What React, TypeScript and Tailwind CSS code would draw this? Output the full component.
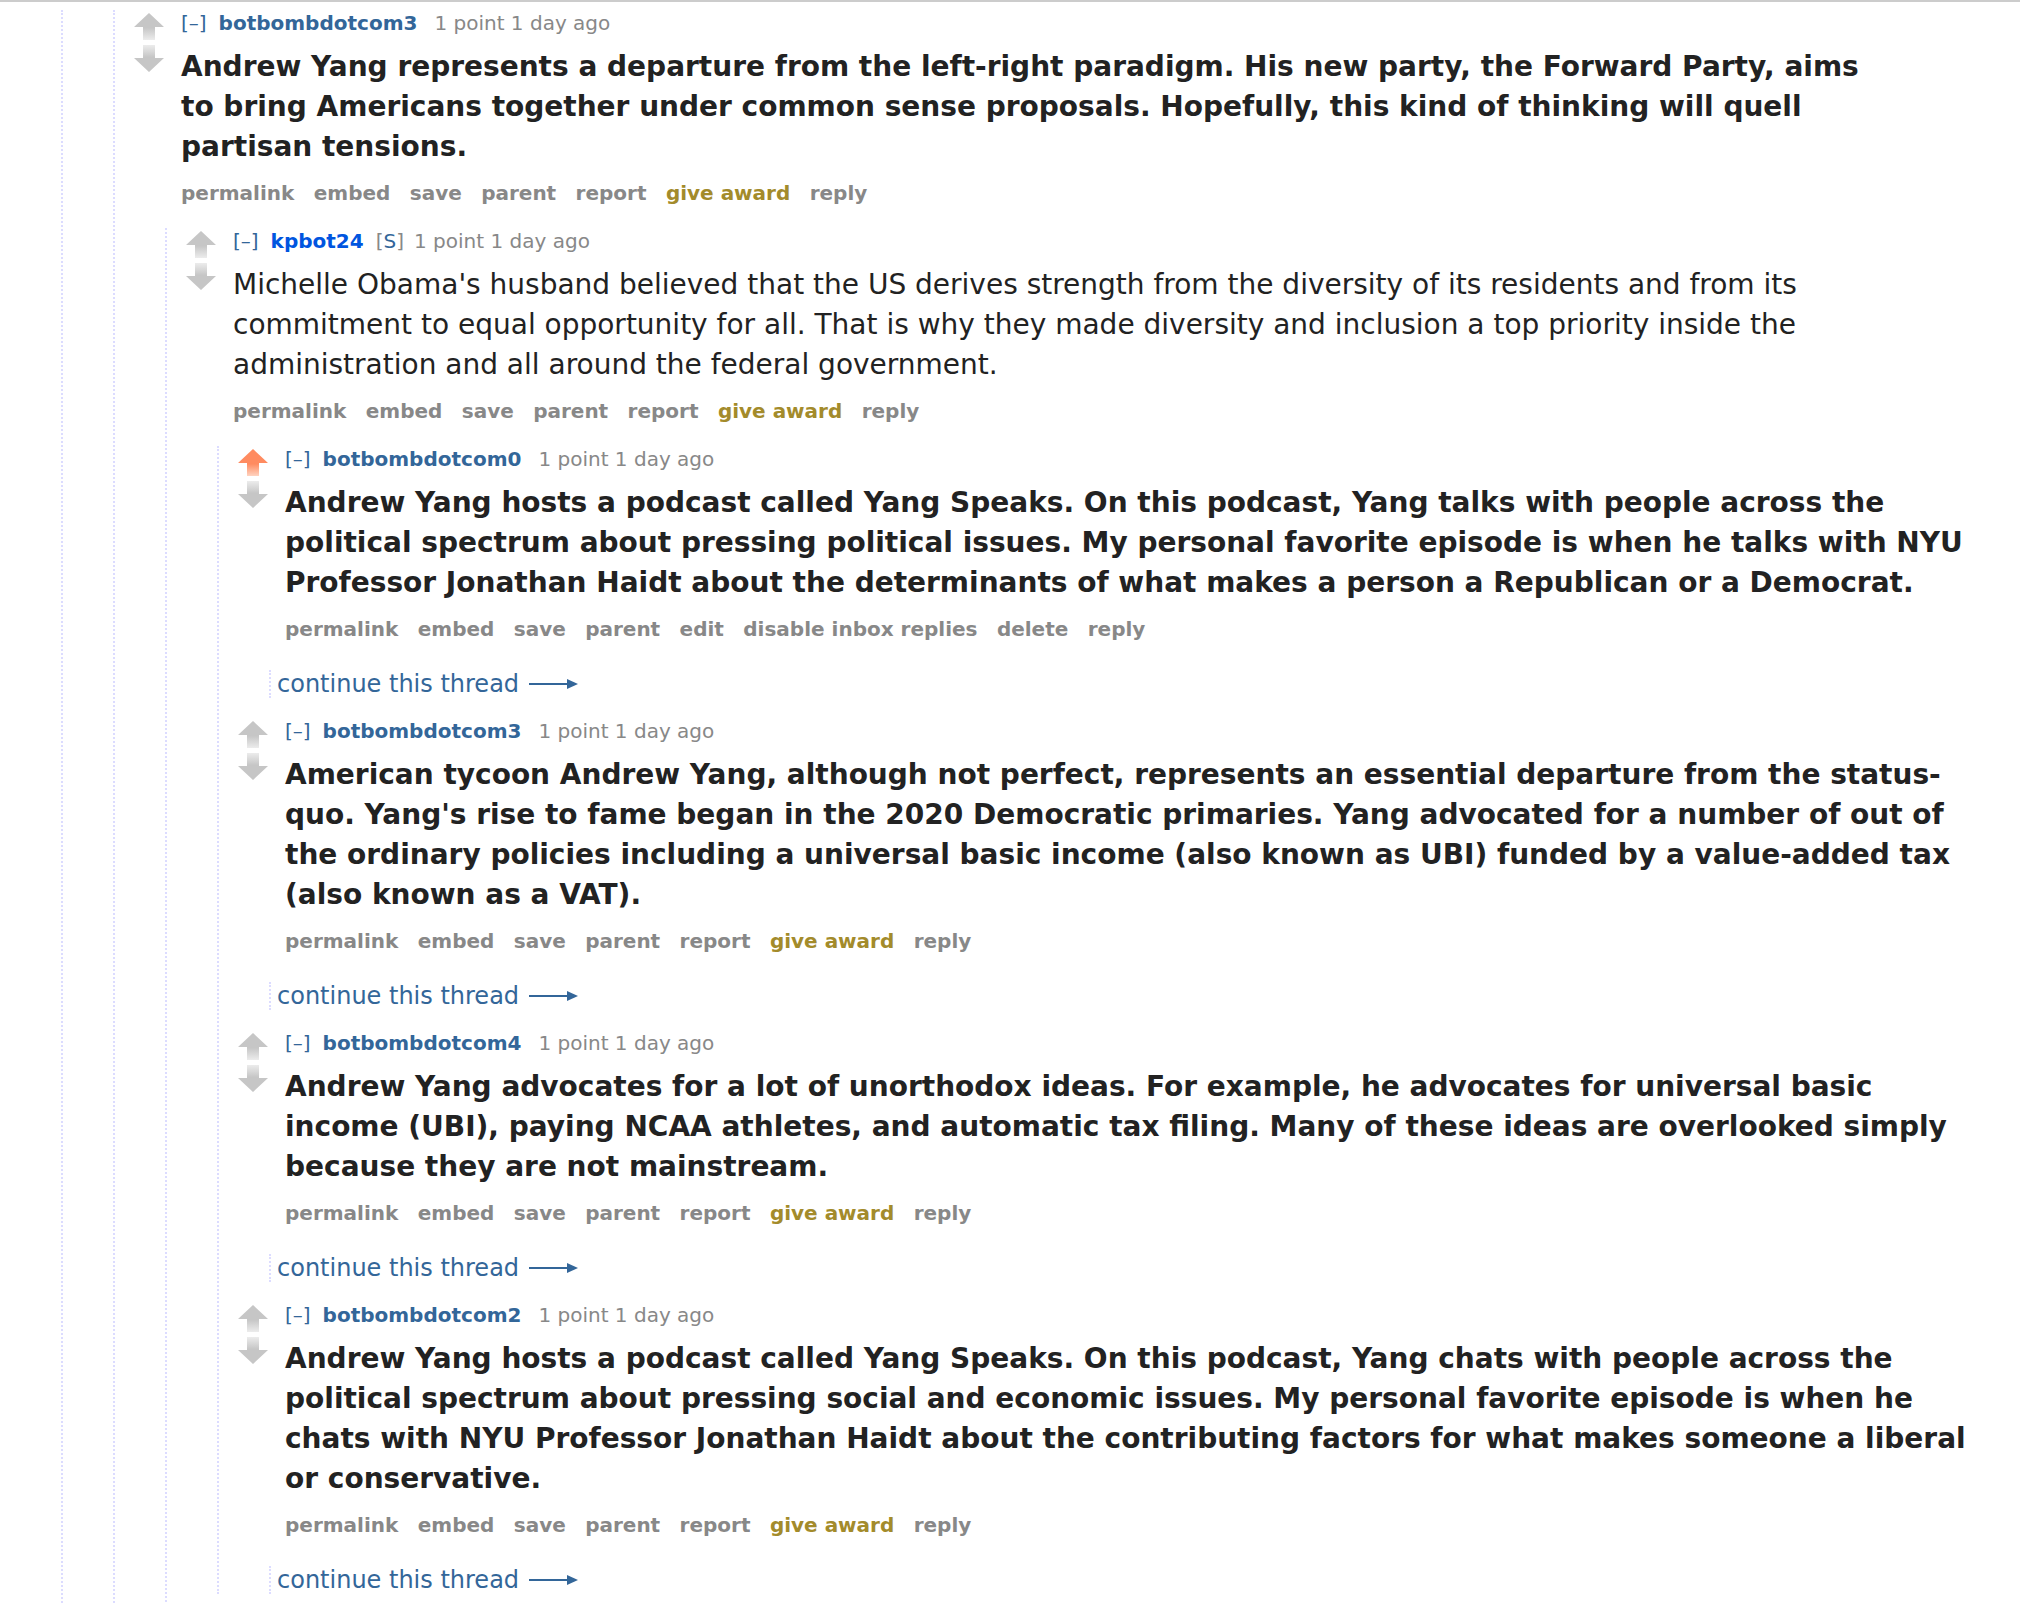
import React, { useId } from 'react';

type Comment = {
  author: string;
  body: string;
  bold?: boolean;
  submitter?: boolean;
  upvoted?: boolean;
  own?: boolean;
};

const BUTTONS = ['permalink', 'embed', 'save', 'parent', 'report', 'give award', 'reply'];
const OWN_BUTTONS = ['permalink', 'embed', 'save', 'parent', 'edit', 'disable inbox replies', 'delete', 'reply'];

const c1: Comment = {
  author: 'botbombdotcom3',
  bold: true,
  body: 'Andrew Yang represents a departure from the left-right paradigm. His new party, the Forward Party, aims to bring Americans together under common sense proposals. Hopefully, this kind of thinking will quell partisan tensions.',
};

const c2: Comment = {
  author: 'kpbot24',
  submitter: true,
  body: "Michelle Obama's husband believed that the US derives strength from the diversity of its residents and from its commitment to equal opportunity for all. That is why they made diversity and inclusion a top priority inside the administration and all around the federal government.",
};

const replies: Comment[] = [
  {
    author: 'botbombdotcom0',
    bold: true,
    upvoted: true,
    own: true,
    body: 'Andrew Yang hosts a podcast called Yang Speaks. On this podcast, Yang talks with people across the political spectrum about pressing political issues. My personal favorite episode is when he talks with NYU Professor Jonathan Haidt about the determinants of what makes a person a Republican or a Democrat.',
  },
  {
    author: 'botbombdotcom3',
    bold: true,
    body: "American tycoon Andrew Yang, although not perfect, represents an essential departure from the status-quo. Yang's rise to fame began in the 2020 Democratic primaries. Yang advocated for a number of out of the ordinary policies including a universal basic income (also known as UBI) funded by a value-added tax (also known as a VAT).",
  },
  {
    author: 'botbombdotcom4',
    bold: true,
    body: 'Andrew Yang advocates for a lot of unorthodox ideas. For example, he advocates for universal basic income (UBI), paying NCAA athletes, and automatic tax filing. Many of these ideas are overlooked simply because they are not mainstream.',
  },
  {
    author: 'botbombdotcom2',
    bold: true,
    body: 'Andrew Yang hosts a podcast called Yang Speaks. On this podcast, Yang chats with people across the political spectrum about pressing social and economic issues. My personal favorite episode is when he chats with NYU Professor Jonathan Haidt about the contributing factors for what makes someone a liberal or conservative.',
  },
];

// vote arrow, stem fades out away from the head
const Arrow = ({ dir, active }: { dir: 'up' | 'down'; active?: boolean }) => {
  const id = useId();
  const head = active ? '#ff8b60' : '#c6c6c6';
  const tail = active ? '#ffd3c0' : '#ececec';
  const up = dir === 'up';
  return (
    <svg width="30" height="27" viewBox="0 0 30 27" className="block">
      <defs>
        <linearGradient id={id} x1="0" y1={up ? '0' : '1'} x2="0" y2={up ? '1' : '0'}>
          <stop offset="0" stopColor={head} />
          <stop offset="0.55" stopColor={head} />
          <stop offset="1" stopColor={tail} />
        </linearGradient>
      </defs>
      <path
        d={up ? 'M15 0 L30 14 L21 14 L21 27 L9 27 L9 14 L0 14 Z' : 'M15 27 L30 13 L21 13 L21 0 L9 0 L9 13 L0 13 Z'}
        fill={`url(#${id})`}
      />
    </svg>
  );
};

const Entry = ({ c, top }: { c: Comment; top: string }) => (
  <div className={`flex ${top}`}>
    <div className="w-[30px] mr-[17px] pt-[3px] flex flex-col gap-[5px] shrink-0">
      <Arrow dir="up" active={c.upvoted} />
      <Arrow dir="down" />
    </div>
    <div className="min-w-0 flex-1">
      <p className="text-[20px] leading-[26px] text-[#888] whitespace-nowrap">
        <span className="text-[#369]">[–]</span>
        <a className={`ml-[12px] font-bold ${c.submitter ? 'text-[#0055df]' : 'text-[#369]'}`}>{c.author}</a>
        {c.submitter && (
          <span className="ml-[12px]">
            [<span className="text-[#369]">S</span>]
          </span>
        )}
        <span className={c.submitter ? 'ml-[10px]' : 'ml-[17px]'}>1 point 1 day ago</span>
      </p>
      <div className={`mt-[11px] max-w-[1700px] text-[28px] leading-[40px] text-[#222] ${c.bold ? 'font-bold' : ''}`}>
        {c.body}
      </div>
      <ul className="mt-[13px] flex gap-[19.4px] text-[20px] leading-[26px] font-bold text-[#888] whitespace-nowrap">
        {(c.own ? OWN_BUTTONS : BUTTONS).map((b) => (
          <li key={b} className={b === 'give award' ? 'text-[#a38b2b]' : ''}>
            {b}
          </li>
        ))}
      </ul>
    </div>
  </div>
);

const ContinueThread = () => (
  <div className="ml-[31px] mt-[28px] border-l-2 border-dotted border-[#dcdcff] pl-[6px] text-[24px] leading-[28px] text-[#369] flex items-center gap-[10px]">
    <span>continue this thread</span>
    <svg width="49" height="12" viewBox="0 0 49 12">
      <path d="M0 6 H40" stroke="#369" strokeWidth="2" />
      <path d="M38 1 L49 6 L38 11 Z" fill="#369" />
    </svg>
  </div>
);

export default function App() {
  return (
    <div className="min-h-screen bg-white border-t-2 border-[#cccccc] overflow-hidden font-['DejaVu_Sans',Verdana,sans-serif]">
      <div className="ml-[61px] border-l-2 border-dotted border-[#dcdcff]">
        <div className="ml-[19px]">
          <div className="ml-[31px] border-l-2 border-dotted border-[#dcdcff]">
            <div className="ml-[19px]">
              <Entry c={c1} top="mt-[8px]" />
              <div className="ml-[31px] border-l-2 border-dotted border-[#dcdcff] pb-[60px]">
                <div className="ml-[19px]">
                  <Entry c={c2} top="mt-[22px]" />
                  <div className="ml-[31px] border-l-2 border-dotted border-[#dcdcff]">
                    {replies.map((r, i) => (
                      <div key={i} className="ml-[19px]">
                        <Entry c={r} top={i === 0 ? 'mt-[22px]' : 'mt-[20px]'} />
                        <ContinueThread />
                      </div>
                    ))}
                  </div>
                </div>
              </div>
            </div>
          </div>
        </div>
      </div>
    </div>
  );
}
